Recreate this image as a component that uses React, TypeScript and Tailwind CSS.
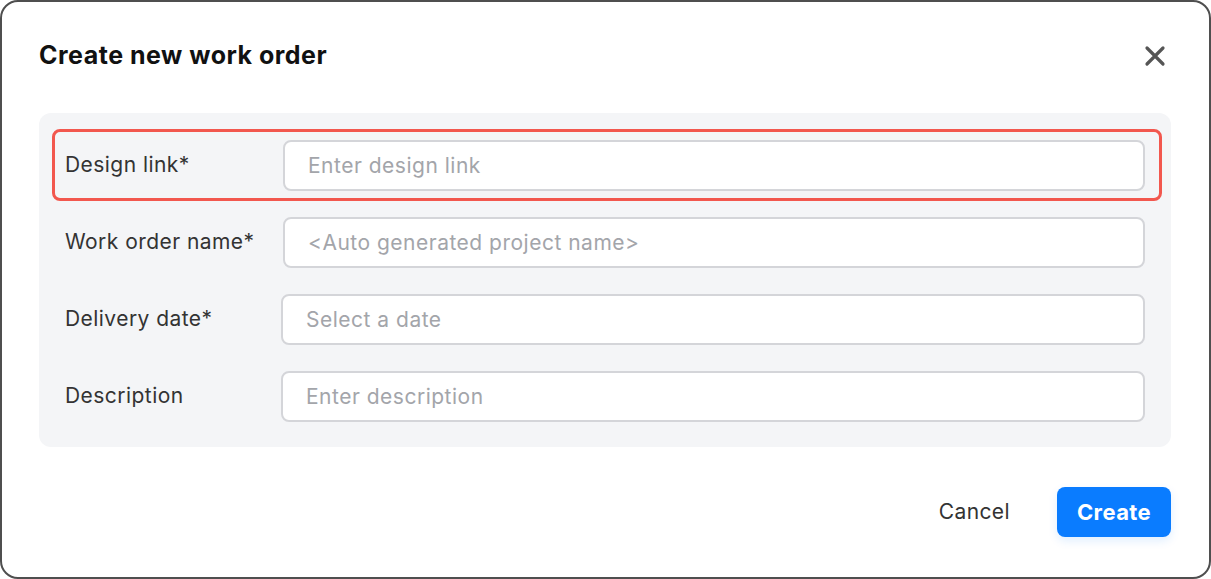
import React from "react"

// ── Form fields ────────────────────────────────────────────────────────────────

type Field = {
  label: string
  placeholder: string
  labelWidth: string
  highlighted?: boolean
}

const FIELDS: Field[] = [
  { label: "Design link*", placeholder: "Enter design link", labelWidth: "w-[218px]", highlighted: true },
  { label: "Work order name*", placeholder: "<Auto generated project name>", labelWidth: "w-[218px]" },
  { label: "Delivery date*", placeholder: "Select a date", labelWidth: "w-[216px]" },
  { label: "Description", placeholder: "Enter description", labelWidth: "w-[216px]" },
]

function CloseIcon() {
  return (
    <svg width="22" height="22" viewBox="0 0 22 22" fill="none">
      <path d="M3 3 L19 19 M19 3 L3 19" stroke="#555555" strokeWidth="3.2" strokeLinecap="round" />
    </svg>
  )
}

function FieldRow({ field }: { field: Field }) {
  return (
    <div
      className={
        field.highlighted
          ? "flex items-center h-[72px] pl-[10px] pr-[14px] rounded-[8px] border-[3px] border-[#f2574e]"
          : "flex items-center h-[72px] pl-[10px] pr-[14px] rounded-[8px] border-[3px] border-transparent"
      }
    >
      <label className={`${field.labelWidth} shrink-0 text-[21px] tracking-[0.45px] text-[#333333]`}>
        {field.label}
      </label>
      <input
        readOnly
        placeholder={field.placeholder}
        className="flex-1 h-[51px] rounded-[8px] border-2 border-[#d4d5d9] bg-white pl-[23px] text-[21px] tracking-[0.5px] text-[#333333] placeholder:text-[#a3a5aa] outline-none"
      />
    </div>
  )
}

// ── Dialog ─────────────────────────────────────────────────────────────────────

export default function App() {
  return (
    <div
      className="w-[1211px] h-[579px] bg-white border-2 border-[#4f4f4f] rounded-[18px] pl-[37px] pr-[38px] flex flex-col"
      style={{ fontFamily: "Inter, 'Noto Sans', sans-serif" }}
    >
      {/* Header */}
      <div className="h-[108px] flex items-center justify-between">
        <h1 className="text-[25px] font-bold text-[#111111] tracking-[0.5px]">Create new work order</h1>
        <button className="mr-[5px]">
          <CloseIcon />
        </button>
      </div>

      {/* Fields */}
      <div className="mt-[3px] bg-[#f4f5f7] rounded-[12px] pl-[13px] pr-[9px] pt-[16px] pb-[15px] flex flex-col gap-[5px]">
        {FIELDS.map(f => (
          <FieldRow key={f.label} field={f} />
        ))}
      </div>

      {/* Footer */}
      <div className="mt-[40px] flex items-center justify-end gap-[47px]">
        <button className="text-[21px] tracking-[0.4px] text-[#333333]">Cancel</button>
        <button className="w-[114px] h-[50px] rounded-[8px] bg-[#0a7cff] text-white text-[22px] font-bold tracking-[0.4px] shadow-[0_4px_10px_rgba(10,124,255,0.12)]">
          Create
        </button>
      </div>
    </div>
  )
}
